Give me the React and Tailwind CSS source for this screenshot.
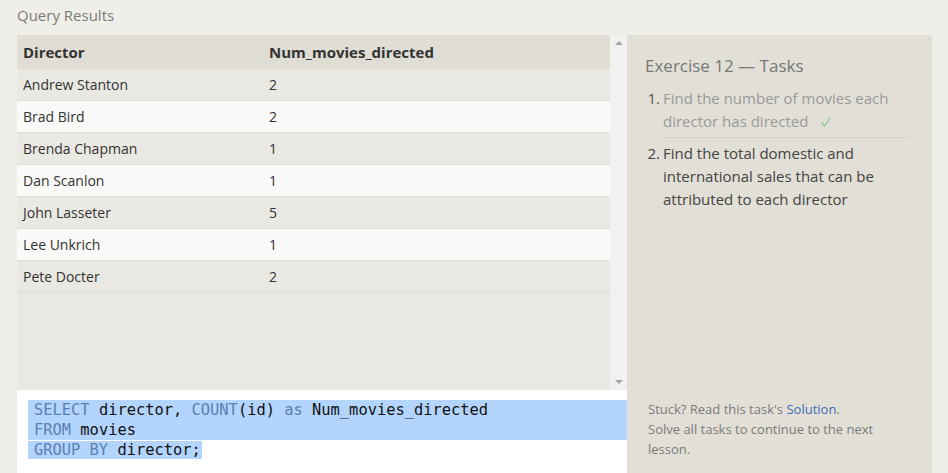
const rows = [
  ['Andrew Stanton', 2],
  ['Brad Bird', 2],
  ['Brenda Chapman', 1],
  ['Dan Scanlon', 1],
  ['John Lasseter', 5],
  ['Lee Unkrich', 1],
  ['Pete Docter', 2],
]

function Kw({ children }) {
  return <span className="text-[#5b7fb5]">{children}</span>
}

export default function App() {
  return (
    <div className="w-[948px] h-[473px] overflow-hidden bg-[#f0eee8] font-['Open_Sans',sans-serif] text-[#333]">
      <div className="pl-[17px] pt-[4px] h-[35px] text-[15px] text-[#7a7a7a]">Query Results</div>

      <div className="flex pl-[17px]">
        {/* left: results + editor */}
        <div className="w-[610px] flex flex-col">
          <div className="flex h-[355px]">
            <div className="w-[593px] bg-[#eae8e2] flex flex-col">
              <div className="flex h-[34px] items-center bg-[#dfddd4] text-[15px] font-bold text-[#333]">
                <div className="w-[252px] pl-[6px]">Director</div>
                <div>Num_movies_directed</div>
              </div>
              {rows.map(([name, n], i) => (
                <div
                  key={name}
                  className={`flex h-[32px] items-center text-[14px] border-b border-[#dedcd6] ${i % 2 === 1 ? 'bg-[#f9f9f7]' : 'bg-[#eae8e2]'}`}
                >
                  <div className="w-[252px] pl-[6px]">{name}</div>
                  <div>{n}</div>
                </div>
              ))}
            </div>
            <div className="w-[17px] bg-[#f1f1f1] flex flex-col items-center justify-between py-[6px]">
              <div className="w-0 h-0 border-l-[4px] border-r-[4px] border-b-[4px] border-l-transparent border-r-transparent border-b-[#a3a3a3]" />
              <div className="w-0 h-0 border-l-[4px] border-r-[4px] border-t-[4px] border-l-transparent border-r-transparent border-t-[#a3a3a3]" />
            </div>
          </div>
          <div className="h-[83px] bg-white pt-[10px] pl-[11px] font-['DejaVu_Sans_Mono',monospace] text-[15.4px] leading-[20px] text-[#111]">
            <div className="bg-[#b3d4fc] pl-[6px]">
              <div>
                <Kw>SELECT</Kw> director, <Kw>COUNT</Kw>(id) <Kw>as</Kw> Num_movies_directed
              </div>
              <div>
                <Kw>FROM</Kw> movies
              </div>
            </div>
            <div>
              <span className="bg-[#b3d4fc] pl-[6px] pr-[1px]">
                <Kw>GROUP BY</Kw> director;
              </span>
            </div>
          </div>
        </div>

        {/* right: tasks */}
        <div className="w-[305px] h-[438px] bg-[#e2dfd6] flex flex-col justify-between pl-[18px] pr-[24px]">
          <div className="pt-[19px]">
            <div className="text-[17px] text-[#777] leading-[24px]">Exercise 12 — Tasks</div>
            <ol className="mt-[9px] text-[15px] leading-[23px]">
              <li className="flex pb-[4px]">
                <span className="w-[18px] shrink-0 text-right pr-[3px] text-[#555]">1.</span>
                <div className="flex-1 border-b border-[#d2cfc6] pb-[4px] text-[#9a9a9a]">
                  Find the number of movies each director has directed
                  <svg viewBox="0 0 12 12" className="inline-block w-[12px] h-[12px] ml-[12px] align-[-1px]">
                    <polyline points="1.5,6.5 4.5,10 10.5,1.5" fill="none" stroke="#8fc48f" strokeWidth="1.2" />
                  </svg>
                </div>
              </li>
              <li className="flex">
                <span className="w-[18px] shrink-0 text-right pr-[3px] text-[#444]">2.</span>
                <div className="flex-1 text-[#444]">
                  Find the total domestic and international sales that can be attributed to each director
                </div>
              </li>
            </ol>
          </div>
          <div className="pb-[14px] pl-[3px] w-[255px] text-[13px] leading-[20px] text-[#7a7a7a]">
            Stuck? Read this task's <span className="text-[#3d6cb9]">Solution</span>.
            <br />
            Solve all tasks to continue to the next lesson.
          </div>
        </div>
      </div>
    </div>
  )
}
